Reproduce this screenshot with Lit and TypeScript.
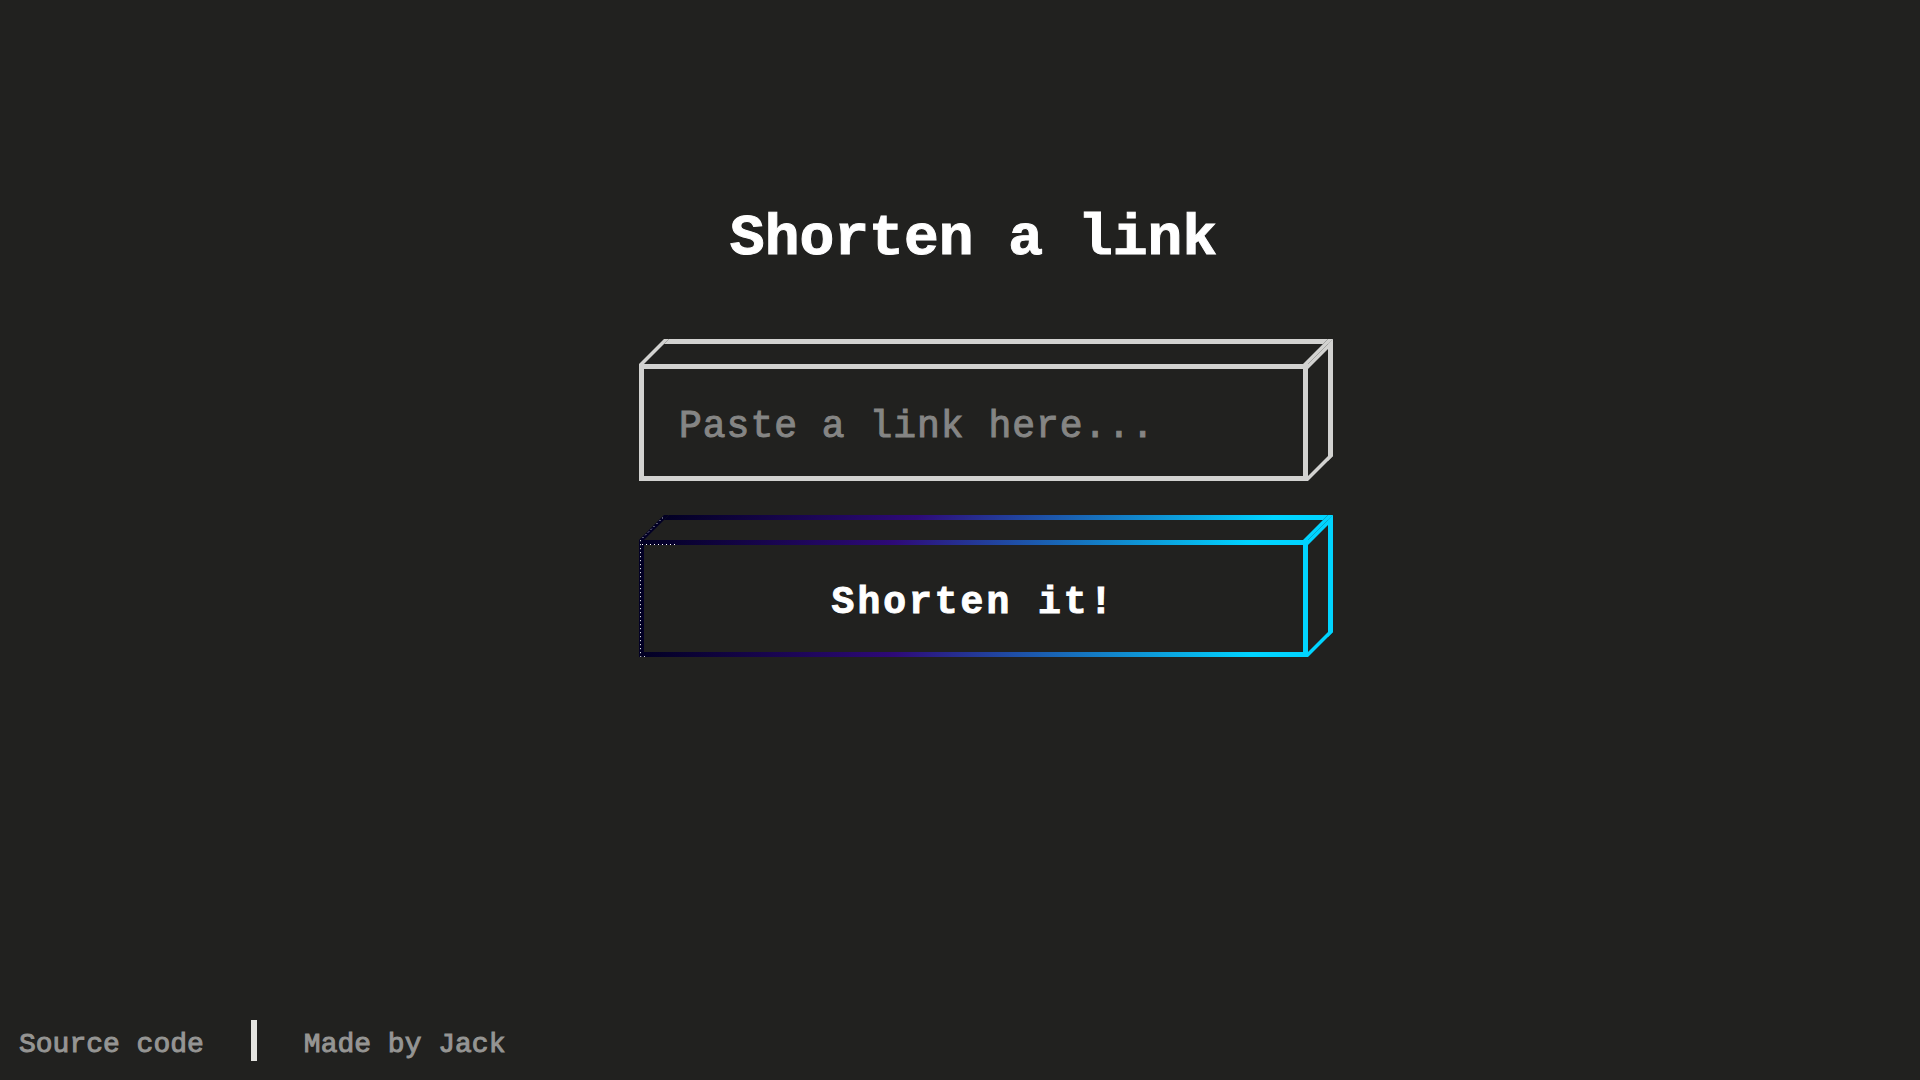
import { LitElement, html, css } from "lit";
import { customElement } from "lit/decorators.js";

@customElement("app-root")
export class AppRoot extends LitElement {
  static styles = css`
    :host {
      display: flex;
      flex-direction: column;
      min-height: 100vh;
      box-sizing: border-box;
      background: #21211f;
      color: #fff;
      font-family: "Liberation Mono", monospace;
    }
    main {
      flex: 1;
      display: flex;
      flex-direction: column;
      align-items: center;
      padding: 206px 0 0 27px;
    }
    h1 {
      margin: 0;
      font-size: 58px;
      line-height: 66px;
      font-weight: 700;
      -webkit-text-stroke: 1px currentColor;
    }
    form {
      display: flex;
      flex-direction: column;
      gap: 59px;
      width: 90%;
      max-width: 669px;
      margin-top: 92px;
    }
    .box {
      --line: 5px;
      --depth: 25px;
      --edge: linear-gradient(#d2d2d0, #d2d2d0);
      --side: #d2d2d0;
      position: relative;
      display: flex;
      height: 117px;
      box-sizing: border-box;
      border: var(--line) solid;
      border-image: var(--edge) 1;
    }
    .box.action {
      --edge: linear-gradient(90deg, #020024 0%, #2e0a78 38%, #00d4ff 92%);
      --side: #00d4ff;
    }
    .box::before,
    .box::after {
      content: "";
      position: absolute;
      box-sizing: border-box;
      pointer-events: none;
    }
    .box::before {
      left: calc(0px - var(--line));
      right: calc(0px - var(--line));
      bottom: calc(100% + var(--line));
      height: var(--depth);
      border: var(--line) solid;
      border-bottom-width: 0;
      border-image: var(--edge) 1;
      transform: skewX(-45deg);
      transform-origin: bottom;
    }
    .box::after {
      top: calc(0px - var(--line));
      bottom: calc(0px - var(--line));
      left: calc(100% + var(--line));
      width: var(--depth);
      border: var(--line) solid var(--side);
      border-left-width: 0;
      transform: skewY(-45deg);
      transform-origin: left;
    }
    .glint {
      position: absolute;
      left: -5px;
      top: -30px;
      width: 40px;
      height: 142px;
      z-index: 1;
      pointer-events: none;
    }
    input,
    button {
      flex: 1;
      min-width: 0;
      margin: 0;
      border: 0;
      border-radius: 0;
      background: transparent;
      color: #fff;
      font-family: inherit;
      font-size: 38px;
      outline: none;
    }
    input {
      padding: 8px 35px 0;
      letter-spacing: 1px;
    }
    input::placeholder {
      color: #858584;
      opacity: 1;
      -webkit-text-stroke: 1px #858584;
    }
    button {
      padding: 8px 0 0;
      font-weight: 700;
      letter-spacing: 3px;
      -webkit-text-stroke: 1px currentColor;
      cursor: pointer;
    }
    footer {
      display: flex;
      align-items: center;
      gap: 47px;
      padding: 0 19px 15px;
      font-size: 28px;
      line-height: 41px;
    }
    a {
      padding-top: 8px;
      color: #959593;
      text-decoration: none;
      -webkit-text-stroke: 1px currentColor;
    }
    .bar {
      width: 6px;
      height: 41px;
      background: #e4e4e0;
    }
  `;

  render() {
    return html`
      <main>
        <h1>Shorten a link</h1>
        <form @submit=${(e: Event) => e.preventDefault()}>
          <div class="box">
            <input id="link" type="text" aria-label="Link" placeholder="Paste a link here..." />
          </div>
          <div class="box action">
            <button type="submit">Shorten it!</button>
            <svg class="glint" viewBox="0 0 40 142" aria-hidden="true">
              <path
                d="M24 2.5 L1.5 25 V141.5 H6 M3 29.5 H38"
                fill="none"
                stroke="#fff"
                stroke-width="1"
                stroke-dasharray="1 3"
              />
            </svg>
          </div>
        </form>
      </main>
      <footer>
        <a href="#source">Source code</a>
        <span class="bar"></span>
        <a href="#author">Made by Jack</a>
      </footer>
    `;
  }
}
